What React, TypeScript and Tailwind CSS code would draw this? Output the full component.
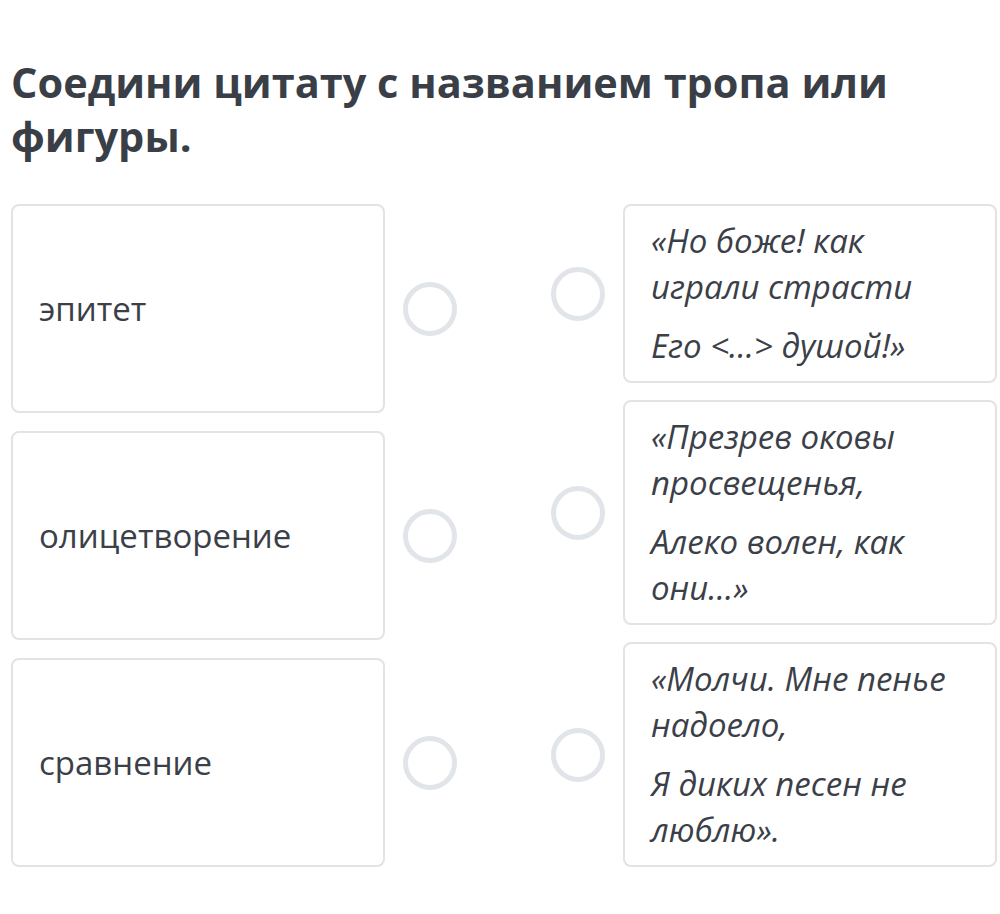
const leftItems = ['эпитет', 'олицетворение', 'сравнение']

const rightItems: string[][][] = [
  [['«Но боже! как', 'играли страсти'], ['Его <…> душой!»']],
  [['«Презрев оковы', 'просвещенья,'], ['Алеко волен, как', 'они…»']],
  [['«Молчи. Мне пенье', 'надоело,'], ['Я диких песен не', 'люблю».']],
]

function Dot() {
  return <div className="w-[54px] h-[54px] shrink-0 rounded-full border-[5px] border-[#e1e5ea] bg-white" />
}

export default function App() {
  return (
    <div className="min-h-[914px] bg-white pl-[11px] pr-[3px] pt-[55px] text-[#3b4048] font-['Open_Sans',sans-serif]">
      <h1 className="text-[41.5px] leading-[54px] font-bold text-[#3a3f47]">
        Соедини цитату с названием тропа или фигуры.
      </h1>

      <div className="mt-[41px] flex justify-between">
        <div className="flex flex-col gap-[18px]">
          {leftItems.map((t) => (
            <div key={t} className="flex items-center gap-[18px]">
              <div className="w-[374px] h-[209px] flex items-center px-[26px] rounded-[8px] border-2 border-[#e3e3e3] bg-white">
                <span className="text-[33px] leading-[44px]">{t}</span>
              </div>
              <Dot />
            </div>
          ))}
        </div>

        <div className="flex flex-col gap-[17px]">
          {rightItems.map((paras, i) => (
            <div key={i} className="flex items-center gap-[18px]">
              <Dot />
              <div className="w-[374px] flex flex-col gap-[13px] px-[26px] py-[12px] rounded-[8px] border-2 border-[#e3e3e3] bg-white">
                {paras.map((lines, j) => (
                  <p key={j} className="text-[33px] leading-[46px] italic whitespace-nowrap">
                    {lines.map((l, k) => (
                      <span key={k} className="block">
                        {l}
                      </span>
                    ))}
                  </p>
                ))}
              </div>
            </div>
          ))}
        </div>
      </div>
    </div>
  )
}
